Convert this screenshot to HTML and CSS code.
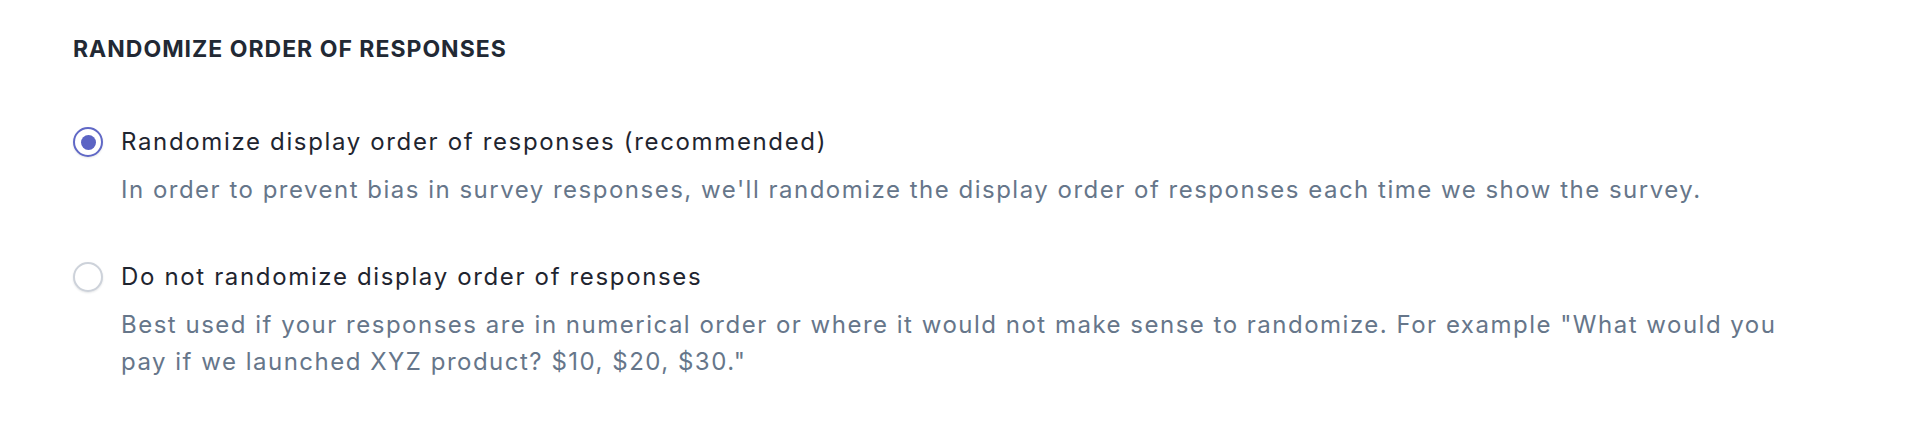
FILE: index.html
```html
<!DOCTYPE html>
<html lang="en">
<head>
<meta charset="utf-8">
<title>Randomize order of responses</title>
<link rel="stylesheet" href="styles.css">
</head>
<body>
<section class="setting">
  <h2 class="setting-title">Randomize order of responses</h2>
  <div class="options">
    <label class="option">
      <input class="radio" type="radio" name="order" checked>
      <span class="option-body">
        <span class="option-label">Randomize display order of responses (recommended)</span>
        <span class="option-desc">In order to prevent bias in survey responses, we'll randomize the display order of responses each time we show the survey.</span>
      </span>
    </label>
    <label class="option">
      <input class="radio" type="radio" name="order">
      <span class="option-body">
        <span class="option-label">Do not randomize display order of responses</span>
        <span class="option-desc">Best used if your responses are in numerical order or where it would not make sense to randomize. For example "What would you pay if we launched XYZ product? $10, $20, $30."</span>
      </span>
    </label>
  </div>
</section>
</body>
</html>
```
FILE: styles.css
```css
* { box-sizing: border-box; }
html, body { margin: 0; background: #ffffff; }
body {
  font-family: Inter, "Noto Sans", "Liberation Sans", sans-serif;
  color: #1f2430;
}
.setting {
  padding: 35px 0 0 73px;
  width: 1830px;
}
.setting-title {
  margin: 0;
  font-size: 23px;
  line-height: 28px;
  font-weight: 700;
  text-transform: uppercase;
  letter-spacing: 1px;
  color: #222934;
}
.options {
  margin-top: 60px;
  display: flex;
  flex-direction: column;
  gap: 50px;
}
.option {
  display: flex;
  gap: 18px;
  cursor: pointer;
}
.radio {
  appearance: none;
  -webkit-appearance: none;
  margin: 4px 0 0 0;
  flex: 0 0 30px;
  width: 30px;
  height: 30px;
  border-radius: 50%;
  border: 2px solid #cdd2da;
  background: #ffffff;
  box-shadow: 0 1px 2px rgba(30, 40, 60, 0.12);
  display: grid;
  place-items: center;
}
.radio:checked {
  border-color: #6068c6;
}
.radio:checked::after {
  content: "";
  width: 15px;
  height: 15px;
  border-radius: 50%;
  background: #5b64c4;
}
.option-body {
  display: flex;
  flex-direction: column;
  gap: 10px;
  max-width: 1700px;
}
.option-label {
  font-size: 24px;
  line-height: 38px;
  letter-spacing: 1.65px;
  color: #1f2530;
}
.option-desc {
  font-size: 24px;
  line-height: 37px;
  letter-spacing: 1.5px;
  color: #66768a;
}
```
